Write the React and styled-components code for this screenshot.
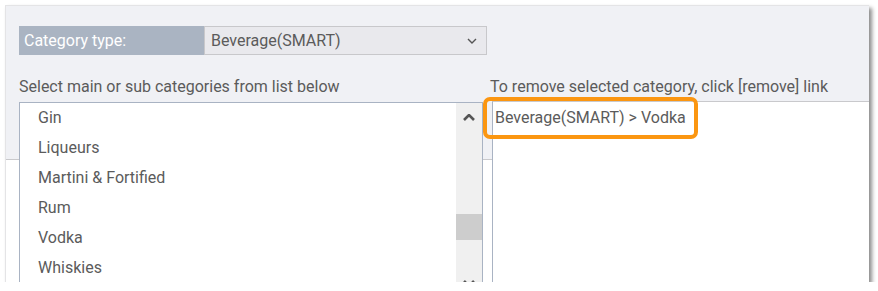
import styled, { createGlobalStyle } from "styled-components";

const GlobalStyle = createGlobalStyle`
  html, body {
    margin: 0;
    padding: 0;
    background: #ffffff;
  }
  body {
    font-family: Roboto, "Liberation Sans", Arial, sans-serif;
  }
`;

const Panel = styled.div`
  margin: 5px 0 0 5px;
  width: 864px;
  height: 277px;
  box-sizing: border-box;
  border-top: 1px solid #e4e4e6;
  border-left: 1px solid #e4e4e6;
  background: linear-gradient(to bottom, #f0f1f5 0, #f0f1f5 153px, #c9c9cc 153px, #c9c9cc 154px, #ffffff 154px);
  box-shadow: 3px 3px 4px rgba(0, 0, 0, 0.45);
  overflow: hidden;
  padding: 20px 0 0 13px;
  color: #5b5b5b;
  font-size: 16px;
`;

const TypeRow = styled.div`
  display: flex;
  height: 29px;
`;

const TypeLabel = styled.div`
  width: 185px;
  background: #aab4c2;
  color: #ffffff;
  display: flex;
  align-items: center;
  padding-left: 5px;
  box-sizing: border-box;
`;

const TypeSelect = styled.div`
  width: 283px;
  box-sizing: border-box;
  background: #e9e9ed;
  border: 1px solid #c8c8cb;
  display: flex;
  align-items: center;
  justify-content: space-between;
  padding: 0 9px 0 6px;
`;

const Columns = styled.div`
  display: grid;
  grid-template-columns: 464px 1fr;
  column-gap: 7px;
  margin-top: 21px;
`;

const Column = styled.div`
  display: flex;
  flex-direction: column;
`;

const Caption = styled.div`
  height: 21px;
  line-height: 21px;
  margin-bottom: ${(p) => p.$gap}px;
  white-space: nowrap;
`;

const ListBox = styled.div`
  height: 194px;
  box-sizing: border-box;
  background: #ffffff;
  border: 1px solid #a9b3c3;
  display: flex;
`;

const Options = styled.ul`
  flex: 1;
  list-style: none;
  margin: 0;
  padding: 0;
`;

const Option = styled.li`
  height: 30px;
  line-height: 30px;
  padding-left: 18px;
`;

const ScrollBar = styled.div`
  width: 26px;
  background: #f0f0f0;
  display: flex;
  flex-direction: column;
`;

const ScrollButton = styled.div`
  height: ${(p) => p.$h}px;
  display: flex;
  align-items: center;
  justify-content: center;
`;

const Track = styled.div`
  flex: 1;
`;

const Thumb = styled.div`
  margin-top: 83px;
  height: 26px;
  background: #cdcdcd;
`;

const SelectedBox = styled.div`
  margin-left: 2px;
  height: 200px;
  background: #ffffff;
  border-top: 1px solid #c9c9cc;
  border-left: 1px solid #a9b3c3;
  padding: 1px 0 0 1px;
`;

const SelectedItem = styled.span`
  position: relative;
  display: inline-block;
  height: 30px;
  line-height: 30px;
  padding-left: 1px;
  white-space: nowrap;

  &::after {
    content: "";
    position: absolute;
    left: -11px;
    right: -12px;
    top: -6px;
    bottom: -6px;
    border: 4px solid #fb9611;
    border-radius: 7px;
  }
`;

const Chevron = ({ up, w, h, sw }) => (
  <svg width={w} height={h} viewBox={`0 0 ${w} ${h}`}>
    <polyline
      points={up ? `1,${h - 1} ${w / 2},1 ${w - 1},${h - 1}` : `1,1 ${w / 2},${h - 1} ${w - 1},1`}
      fill="none"
      stroke="#555"
      strokeWidth={sw}
    />
  </svg>
);

const drinks = ["Gin", "Liqueurs", "Martini & Fortified", "Rum", "Vodka", "Whiskies"];

export default function App() {
  return (
    <>
      <GlobalStyle />
      <Panel>
        <TypeRow>
          <TypeLabel>Category type:</TypeLabel>
          <TypeSelect>
            <span>Beverage(SMART)</span>
            <Chevron w={10} h={6} sw={1.4} />
          </TypeSelect>
        </TypeRow>
        <Columns>
          <Column>
            <Caption $gap={5}>Select main or sub categories from list below</Caption>
            <ListBox>
              <Options>
                {drinks.map((d) => (
                  <Option key={d}>{d}</Option>
                ))}
              </Options>
              <ScrollBar>
                <ScrollButton $h={28}>
                  <Chevron up w={12} h={7} sw={2.6} />
                </ScrollButton>
                <Track>
                  <Thumb />
                </Track>
                <ScrollButton $h={24}>
                  <Chevron w={12} h={7} sw={2.6} />
                </ScrollButton>
              </ScrollBar>
            </ListBox>
          </Column>
          <Column>
            <Caption $gap={4}>To remove selected category, click [remove] link</Caption>
            <SelectedBox>
              <SelectedItem>Beverage(SMART) &gt; Vodka</SelectedItem>
            </SelectedBox>
          </Column>
        </Columns>
      </Panel>
    </>
  );
}
